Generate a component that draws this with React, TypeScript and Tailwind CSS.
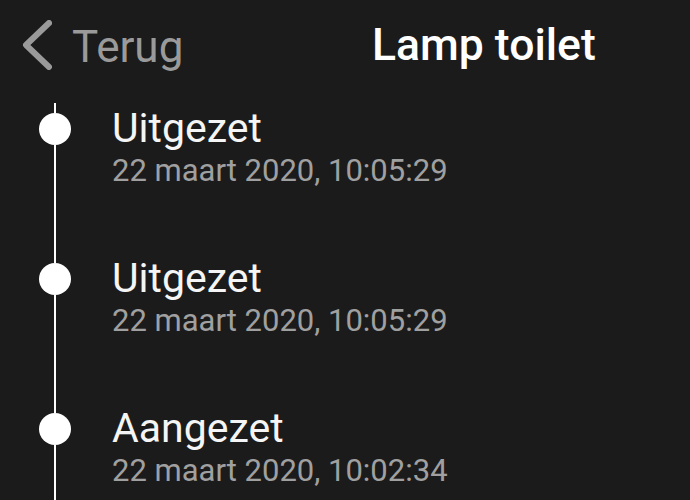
import React from 'react';

interface LogEntry {
  id: number;
  state: string;
  time: string;
}

const entries: LogEntry[] = [
  { id: 1, state: 'Uitgezet', time: '22 maart 2020, 10:05:29' },
  { id: 2, state: 'Uitgezet', time: '22 maart 2020, 10:05:29' },
  { id: 3, state: 'Aangezet', time: '22 maart 2020, 10:02:34' },
];

function BackChevron() {
  return (
    <svg width="30" height="50" viewBox="0 0 30 50" className="shrink-0">
      <path
        d="M27 3 L4 25 L27 47"
        fill="none"
        stroke="#9a9a9a"
        strokeWidth="6"
        strokeLinecap="round"
        strokeLinejoin="round"
      />
    </svg>
  );
}

function TimelineRow({ entry }: { entry: LogEntry }) {
  return (
    <div className="flex h-[150px]">
      <div className="w-[110px] shrink-0 flex flex-col items-center">
        <div className="w-[2px] h-[10px] bg-white"></div>
        <div className="w-[32px] h-[32px] rounded-full bg-white"></div>
        <div className="w-[2px] flex-1 bg-white"></div>
      </div>
      <div className="pt-[2px] pl-[2px]">
        <div className="text-[41px] leading-[46px] text-[#f5f5f5]">{entry.state}</div>
        <div className="text-[31px] leading-[40px] text-[#a0a0a0]">{entry.time}</div>
      </div>
    </div>
  );
}

export default function App() {
  return (
    <div
      className="w-[690px] h-[500px] overflow-hidden bg-[#1b1b1b]"
      style={{ fontFamily: 'Roboto, "Noto Sans", sans-serif' }}
    >
      <div className="h-[103px] flex items-start pl-[22px] pt-[20px]">
        <BackChevron />
        <div className="w-[300px] ml-[20px] mt-[2px] text-[44px] leading-[50px] text-[#9a9a9a]">Terug</div>
        <div className="text-[44.5px] leading-[50px] font-medium text-white">Lamp toilet</div>
      </div>
      <div>
        {entries.map((entry) => (
          <TimelineRow key={entry.id} entry={entry} />
        ))}
      </div>
    </div>
  );
}
